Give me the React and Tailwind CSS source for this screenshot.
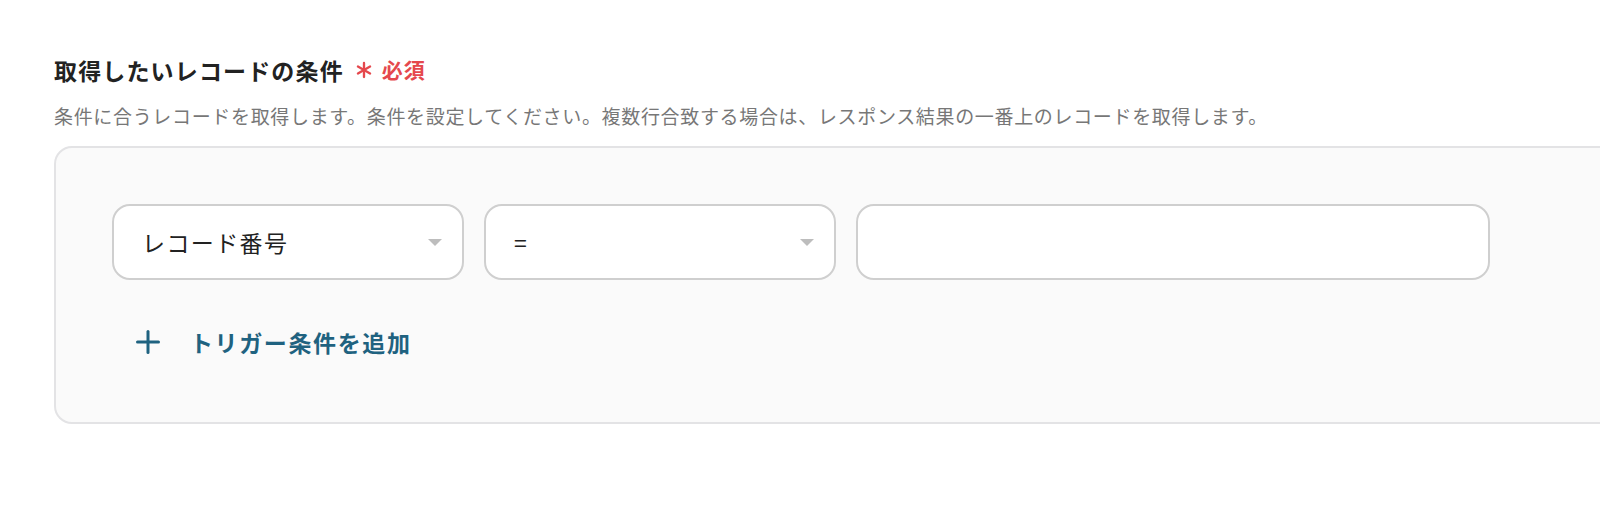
import { Asterisk, Plus } from "lucide-react";

const font = { fontFamily: '"Noto Sans CJK JP", "Noto Sans", sans-serif' };

function SelectBox({ label, width }) {
  return (
    <div
      className={`relative h-[76px] ${width} shrink-0 rounded-[18px] border-2 border-[#cfcfcf] bg-white flex items-center pl-[28px] pr-[20px]`}
    >
      <span className="text-[23px] text-[#222] tracking-[0.06em]">{label}</span>
      <span className="ml-auto w-0 h-0 border-l-[7px] border-r-[7px] border-t-[7px] border-l-transparent border-r-transparent border-t-[#bdbdbd]" />
    </div>
  );
}

export default function App() {
  return (
    <div className="w-[1600px] h-[514px] overflow-hidden bg-white" style={font}>
      <div className="pt-[54px] pl-[54px]">
        {/* タイトル */}
        <div className="flex items-center h-[32px]">
          <h2 className="text-[23px] font-bold text-[#222] tracking-[0.05em] leading-[32px]">
            取得したいレコードの条件
          </h2>
          <Asterisk className="ml-[6px] text-[#e5484d]" size={28} strokeWidth={2} />
          <span className="ml-[4px] text-[21px] font-bold text-[#e5484d] tracking-[0.04em]">必須</span>
        </div>

        {/* 説明 */}
        <p className="mt-[16px] text-[19px] leading-[28px] text-[#777] tracking-[0.035em] whitespace-nowrap">
          条件に合うレコードを取得します。条件を設定してください。複数行合致する場合は、レスポンス結果の一番上のレコードを取得します。
        </p>

        {/* 条件パネル */}
        <div className="mt-[16px] w-[1600px] h-[278px] rounded-[18px] border-2 border-[#e3e3e5] bg-[#fafafa] pt-[56px] pl-[56px]">
          <div className="flex gap-[20px]">
            <SelectBox label="レコード番号" width="w-[352px]" />
            <SelectBox label="=" width="w-[352px]" />
            <div className="h-[76px] w-[634px] rounded-[18px] border-2 border-[#cfcfcf] bg-white" />
          </div>

          <button className="mt-[44px] ml-[18px] flex items-center text-[#1f6280]">
            <Plus size={36} strokeWidth={2} />
            <span className="ml-[24px] text-[23px] font-bold tracking-[0.07em] leading-[36px]">
              トリガー条件を追加
            </span>
          </button>
        </div>
      </div>
    </div>
  );
}
